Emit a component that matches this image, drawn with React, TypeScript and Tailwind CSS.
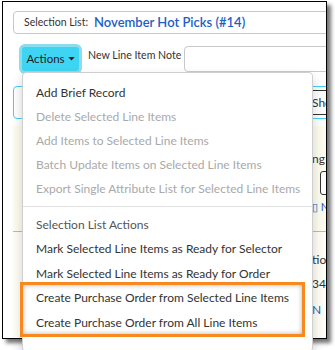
import React from "react";

const items: { label: string; disabled?: boolean }[] = [
  { label: "Add Brief Record" },
  { label: "Delete Selected Line Items", disabled: true },
  { label: "Add Items to Selected Line Items", disabled: true },
  { label: "Batch Update Items on Selected Line Items", disabled: true },
  { label: "Export Single Attribute List for Selected Line Items", disabled: true },
];

const items2 = [
  "Mark Selected Line Items as Ready for Selector",
  "Mark Selected Line Items as Ready for Order",
  "Create Purchase Order from Selected Line Items",
  "Create Purchase Order from All Line Items",
];

export default function App() {
  return (
    <div
      className="w-[335px] h-[350px] bg-white pt-[1px] overflow-hidden text-[12px] text-[#333]"
      style={{ fontFamily: "Lato, 'Noto Sans', sans-serif" }}
    >
      <div className="relative ml-[2px] w-[325px] h-[338px] border border-black shadow-[4px_4px_4px_rgba(0,0,0,0.55)] bg-white">
        <div className="w-full h-full overflow-hidden">
          {/* Selection list bar */}
          <div className="ml-[10px] mt-[9px] w-[340px] h-[23px] border border-[#c6c8ca] rounded-[4px] flex items-center pl-[10px] shrink-0">
            <span className="text-[#333] text-[10.5px]">Selection List:</span>
            <span className="ml-[6px] text-[#1f5fc4] font-semibold text-[13px]">November Hot Picks (#14)</span>
          </div>
          {/* Actions row */}
          <div className="flex items-start mt-[13px] w-[360px]">
            <button className="ml-[19px] w-[57px] h-[24px] bg-[#3dd5f3] rounded-[3px] ring-[3px] ring-[#8bdcee] flex items-center justify-center text-[#222] text-[11.5px] shrink-0">
              Actions
              <svg width="7" height="4" viewBox="0 0 8 5" className="ml-[3px]">
                <path d="M0 0 L8 0 L4 4.5 Z" fill="#222" />
              </svg>
            </button>
            <span className="ml-[9px] mt-[1px] text-[#333] text-[10.6px] shrink-0">New Line Item Note</span>
            <div className="ml-[3px] -mt-[1px] w-[200px] h-[26px] border border-[#c6c8ca] rounded-l-[4px] shrink-0" />
          </div>
          {/* Background tabs / table */}
          <div className="ml-[10px] mt-[14px] w-[340px] h-[33px] border border-[#3dd5f3] rounded-[4px] flex items-center">
            <div className="w-[298px] shrink-0" />
            <div className="h-[25px] w-[40px] border-y border-[#333] flex items-center text-[#333]">Show</div>
          </div>
          {/* Yellow panel */}
          <div className="ml-[10px] mt-[7px] w-[340px] h-[105px] bg-[#fdfdef] flex">
            <div className="w-[9px] shrink-0" />
            <div className="w-[1px] bg-[#c9c4b6] mt-[50px] h-[20px]" />
            <div className="w-[289px] shrink-0" />
            <div className="flex flex-col pt-[24px]">
              <span className="text-[#333]">ng</span>
              <div className="ml-[8px] mt-[3px] w-[30px] h-[24px] border border-[#333] rounded-[3px] bg-white" />
              <span className="mt-[6px] text-[#1f5fc4] text-[11px] leading-[12px]">▯ N</span>
            </div>
          </div>
          <div className="ml-[10px] w-[340px] h-[1px] bg-[#bbb]" />
          <div className="ml-[10px] w-[340px] h-[110px] bg-[#fefef6] flex">
            <div className="w-[9px] shrink-0" />
            <div className="w-[1px] bg-[#c9c4b6]" />
            <div className="w-[289px] shrink-0 bg-white" />
            <div className="flex flex-col pt-[19px]">
              <span className="text-[#333]">tion</span>
              <span className="mt-[6px] text-[#333]">34.</span>
              <span className="mt-[8px] text-[#1f5fc4]">N</span>
            </div>
          </div>
        </div>

        {/* Dropdown menu */}
        <div className="absolute left-[19px] top-[70px] w-[291px] h-[280px] bg-white border border-[#cfcfcf] rounded-[4px] shadow-[0_6px_12px_rgba(0,0,0,0.18)] pt-[8px]">
          {items.map((it) => (
            <div
              key={it.label}
              className={`h-[24px] flex items-center pl-[13px] whitespace-nowrap ${it.disabled ? "text-[#a9a9a9]" : "text-[#333]"}`}
            >
              {it.label}
            </div>
          ))}
          <div className="mt-[5px] h-[1px] bg-[#e2e2e2]" />
          <div className="mt-[6px] h-[24px] flex items-center pl-[13px] text-[#555]">Selection List Actions</div>
          {items2.map((l) => (
            <div key={l} className="h-[24.5px] flex items-center pl-[13px] whitespace-nowrap text-[#333]">
              {l}
            </div>
          ))}
        </div>

        {/* Orange annotation */}
        <div className="absolute left-[17px] top-[280px] w-[285px] h-[55px] border-[3px] border-[#f7891e] shadow-[inset_0_0_5px_rgba(0,0,0,0.3)]" />
      </div>
    </div>
  );
}
